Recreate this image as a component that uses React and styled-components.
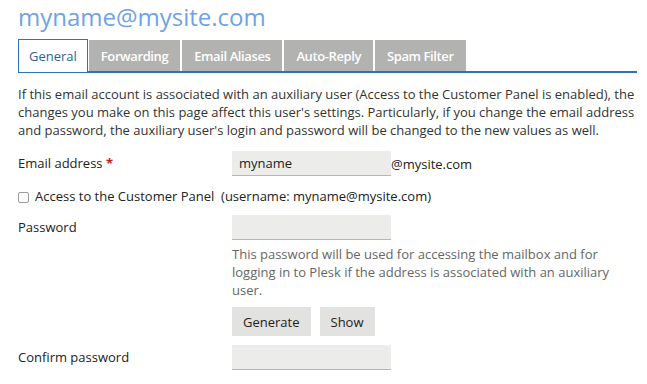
import styled, { createGlobalStyle } from "styled-components";

const Global = createGlobalStyle`
  body {
    margin: 0;
    background: #fff;
    font-family: "Open Sans", "DejaVu Sans", sans-serif;
    color: #333;
  }
`;

const Page = styled.div`
  padding: 0 10px 0 18px;
  width: 619px;
`;

const Title = styled.h1`
  margin: 0;
  padding-top: 2px;
  font-size: 24px;
  line-height: 30px;
  font-weight: 400;
  color: #6fa3e6;
`;

const TabBar = styled.div`
  display: flex;
  margin-top: 8px;
  border-bottom: 2px solid #2c74b5;
  height: 31px;
`;

const Tab = styled.div`
  box-sizing: border-box;
  height: ${(p) => (p.$active ? "33px" : "31px")};
  margin-right: ${(p) => (p.$active ? "1px" : "2px")};
  padding: 0 ${(p) => (p.$active ? "10px" : "12px")};
  display: flex;
  align-items: center;
  font-size: 13px;
  letter-spacing: ${(p) => (p.$active ? "0" : "-0.4px")};
  font-weight: ${(p) => (p.$active ? 400 : 600)};
  color: ${(p) => (p.$active ? "#2f5f93" : "#fff")};
  background: ${(p) => (p.$active ? "#fff" : "#b2b2b0")};
  border: ${(p) => (p.$active ? "1px solid #2c74b5" : "none")};
  border-bottom: none;
  margin-top: ${(p) => (p.$active ? "-1px" : "0")};
  position: relative;
  z-index: ${(p) => (p.$active ? 1 : 0)};
`;

const Intro = styled.p`
  margin: 12px 0 0;
  font-size: 13px;
  line-height: 18px;
  color: #333;
`;

const Form = styled.div`
  margin-top: 12px;
  display: flex;
  flex-direction: column;
`;

const Row = styled.div`
  display: flex;
  align-items: flex-start;
  margin-bottom: ${(p) => p.$gap || "10px"};
`;

const Label = styled.div`
  width: 214px;
  flex-shrink: 0;
  font-size: 13px;
  line-height: 24px;
  color: #222;
`;

const Required = styled.span`
  color: #c41b1b;
  font-weight: 700;
`;

const Field = styled.div`
  display: flex;
  flex-direction: column;
`;

const InputLine = styled.div`
  display: flex;
  align-items: center;
  font-size: 13px;
  color: #222;
`;

const Input = styled.input`
  box-sizing: border-box;
  width: 159px;
  height: 25px;
  border: none;
  border-bottom: 1px solid #b3b6ba;
  background: #ecedea;
  padding: 0 7px;
  font-family: inherit;
  font-size: 13px;
  color: #222;
  outline: none;
`;

const CheckRow = styled.label`
  display: flex;
  align-items: center;
  font-size: 13px;
  color: #222;
  height: 20px;
  margin-bottom: 9px;
`;

const Box = styled.span`
  box-sizing: border-box;
  width: 11px;
  height: 11px;
  border: 1px solid #9a9a9a;
  border-radius: 2px;
  margin: 3px 6px 0 0;
  background: #fff;
`;

const Hint = styled.div`
  width: 400px;
  margin-top: 5px;
  font-size: 13px;
  line-height: 18px;
  color: #666;
`;

const Buttons = styled.div`
  display: flex;
  gap: 9px;
  margin-top: 8px;
`;

const Button = styled.button`
  height: 29px;
  padding: 0 11px;
  border: none;
  background: #e2e2e0;
  font-family: inherit;
  font-size: 13px;
  color: #222;
`;

export default function App() {
  return (
    <Page>
      <Global />
      <Title>myname@mysite.com</Title>
      <TabBar>
        <Tab $active>General</Tab>
        <Tab>Forwarding</Tab>
        <Tab>Email Aliases</Tab>
        <Tab>Auto-Reply</Tab>
        <Tab>Spam Filter</Tab>
      </TabBar>
      <Intro>
        If this email account is associated with an auxiliary user (Access to the Customer Panel is enabled), the
        changes you make on this page affect this user's settings. Particularly, if you change the email address
        and password, the auxiliary user's login and password will be changed to the new values as well.
      </Intro>
      <Form>
        <Row>
          <Label>
            Email address <Required>*</Required>
          </Label>
          <InputLine>
            <Input defaultValue="myname" />
            @mysite.com
          </InputLine>
        </Row>
        <CheckRow>
          <Box />
          Access to the Customer Panel&nbsp;&nbsp;(username: myname@mysite.com)
        </CheckRow>
        <Row $gap="9px">
          <Label>Password</Label>
          <Field>
            <Input type="password" />
            <Hint>
              This password will be used for accessing the mailbox and for logging in to Plesk if the address is
              associated with an auxiliary user.
            </Hint>
            <Buttons>
              <Button>Generate</Button>
              <Button>Show</Button>
            </Buttons>
          </Field>
        </Row>
        <Row>
          <Label>Confirm password</Label>
          <Input type="password" />
        </Row>
      </Form>
    </Page>
  );
}
